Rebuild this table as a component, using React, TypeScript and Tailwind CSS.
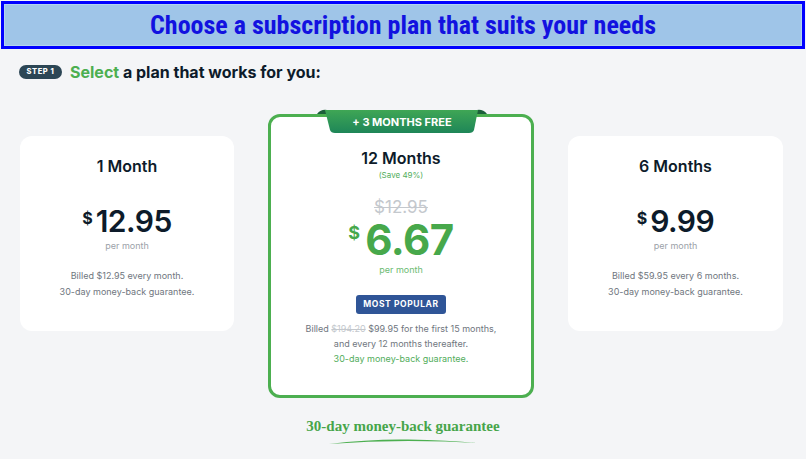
type Plan = {
  title: string;
  price: string;
  lines: string[];
};

const sidePlans: Record<string, Plan> = {
  one: {
    title: "1 Month",
    price: "12.95",
    lines: ["Billed $12.95 every month.", "30-day money-back guarantee."],
  },
  six: {
    title: "6 Months",
    price: "9.99",
    lines: ["Billed $59.95 every 6 months.", "30-day money-back guarantee."],
  },
};

function SideCard({ plan, width }: { plan: Plan; width: string }) {
  return (
    <div
      className={`${width} mt-[22px] h-[195px] bg-white rounded-[12px] flex flex-col items-center`}
    >
      <h3 className="mt-[19px] text-[16px] leading-[22px] font-semibold text-[#0d1b2a]">
        {plan.title}
      </h3>
      <div className="mt-[29px] flex items-start text-[#0d1b2a]">
        <span className="text-[16px] leading-[16px] font-bold mt-[4px] mr-[3px]">
          $
        </span>
        <span className="text-[30px] leading-[30px] font-semibold tracking-[-0.5px]">
          {plan.price}
        </span>
      </div>
      <p className="mt-[4px] text-[9px] leading-[12px] text-[#9ba1a8]">
        per month
      </p>
      <div className="mt-[18px] flex flex-col items-center gap-[4px] text-[9px] leading-[12px] text-[#6f767e]">
        {plan.lines.map((l) => (
          <p key={l}>{l}</p>
        ))}
      </div>
    </div>
  );
}

function Ribbon() {
  return (
    <div className="absolute left-[46px] top-[-8px] w-[170px] h-[26px]">
      <svg width="170" height="26" viewBox="0 0 170 26" className="absolute inset-0">
        <defs>
          <linearGradient id="rib" x1="0" y1="0" x2="0" y2="1">
            <stop offset="0" stopColor="#3fa655" />
            <stop offset="1" stopColor="#1e8658" />
          </linearGradient>
        </defs>
        <path d="M0 5 Q4 0 10 1 L11 5 Z" fill="#1c5f3a" />
        <path d="M160 1 Q166 0 170 5 L159 5 Z" fill="#1c5f3a" />
        <path
          d="M8 1 L161 1 L157 21 Q156 24 152 24 L18 24 Q14 24 13 21 Z"
          fill="url(#rib)"
        />
      </svg>
      <span className="absolute left-0 right-0 top-[7px] text-center text-[11px] leading-[12px] font-bold text-white">
        + 3 MONTHS FREE
      </span>
    </div>
  );
}

function FeaturedCard() {
  return (
    <div className="relative w-[266px] h-[284px] bg-white border-[3px] border-[#4caf50] rounded-[12px] flex flex-col items-center">
      <Ribbon />
      <h3 className="mt-[30px] text-[16px] leading-[22px] font-semibold text-[#0d1b2a]">
        12 Months
      </h3>
      <p className="mt-[1px] text-[8px] leading-[11px] text-[#52ad5b]">
        (Save 49%)
      </p>
      <p className="mt-[17px] text-[17px] leading-[18px] text-[#c4c8cd] line-through">
        $12.95
      </p>
      <div className="mt-[1px] flex items-start text-[#47a84b]">
        <span className="text-[18px] leading-[18px] font-bold mt-[7px] mr-[5px]">
          $
        </span>
        <span className="text-[42px] leading-[46px] font-bold tracking-[-0.5px]">
          6.67
        </span>
      </div>
      <p className="mt-[1px] text-[9px] leading-[12px] text-[#6cbb72]">
        per month
      </p>
      <div className="mt-[19px] h-[19px] px-[7px] rounded-[3px] bg-[#2f5597] flex items-center text-[8.5px] font-bold tracking-[0.6px] text-white">
        MOST POPULAR
      </div>
      <div className="mt-[9px] flex flex-col items-center gap-[3px] text-[9px] leading-[12px] text-[#6f767e]">
        <p>
          Billed <span className="text-[#c4c8cd] line-through">$194.20</span>{" "}
          $99.95 for the first 15 months,
        </p>
        <p>and every 12 months thereafter.</p>
        <p className="text-[#52ad5b]">30-day money-back guarantee.</p>
      </div>
    </div>
  );
}

export default function App() {
  return (
    <div className="w-[806px] h-[459px] overflow-hidden bg-[#f4f5f7] font-['Inter',sans-serif]">
      <div className="mx-[1px] mt-[1px] h-[48px] border-[3px] border-[#0000ff] bg-[#9fc5e8] shadow-[inset_0_0_0_1px_#b3d3ef] flex items-center justify-center">
        <h1 className="text-[26px] leading-[30px] font-bold text-[#1212e0] font-['Roboto_Condensed','Liberation_Sans_Narrow','DejaVu_Sans_Condensed',Roboto,sans-serif]">
          Choose a subscription plan that suits your needs
        </h1>
      </div>

      <div className="mt-[14px] px-[19px] flex items-center gap-[8px]">
        <span className="h-[14px] w-[43px] rounded-full bg-[#2c4655] flex items-center justify-center text-[7.5px] font-extrabold tracking-[0.6px] text-white">
          STEP 1
        </span>
        <p className="text-[16px] leading-[18px] font-bold text-[#0d1b2a]">
          <span className="text-[#4caf50]">Select</span> a plan that works for
          you:
        </p>
      </div>

      <div className="mt-[33px] pl-[20px] flex items-start gap-[34px]">
        <SideCard plan={sidePlans.one} width="w-[214px]" />
        <FeaturedCard />
        <SideCard plan={sidePlans.six} width="w-[215px]" />
      </div>

      <div className="mt-[19px] flex flex-col items-center">
        <p className="text-[15px] leading-[18px] text-[#47a54a] font-['Liberation_Serif',serif] font-semibold">
          30-day money-back guarantee
        </p>
        <svg width="150" height="8" viewBox="0 0 150 8" className="mt-[3px]">
          <path
            d="M1 6 Q40 1 80 1.5 Q120 2 149 5 Q120 3.2 80 3 Q40 3 1 6 Z"
            fill="#4caf50"
          />
        </svg>
      </div>
    </div>
  );
}
